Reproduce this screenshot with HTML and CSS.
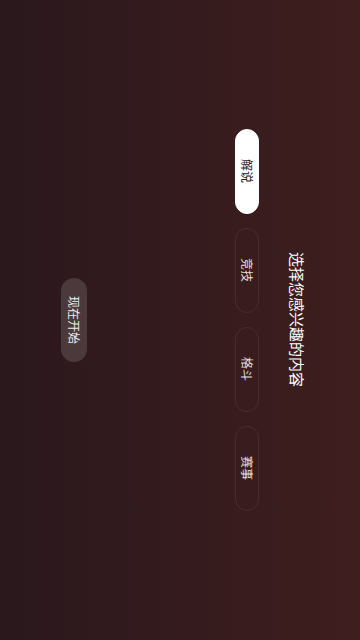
FILE: index.html
```html
<!DOCTYPE html>
<html lang="zh-CN">
<head>
    <meta charset="UTF-8">
    <meta name="viewport" content="width=device-width, initial-scale=1.0">
    <title>选择兴趣</title>
    <link rel="stylesheet" href="styles.css">
</head>
<body>
    <div class="page">
        <h1 class="title">选择您感兴趣的内容</h1>
        <div class="tags">
            <button class="tag active">解说</button>
            <button class="tag">竞技</button>
            <button class="tag">格斗</button>
            <button class="tag">赛事</button>
        </div>
        <button class="start-btn">现在开始</button>
    </div>
</body>
</html>
```

FILE: styles.css
```css
html {
    background: linear-gradient(to right, #2a181d, #3f1e1e);
    height: 100%;
}
body {
    margin: 0;
    width: 360px;
    height: 640px;
    overflow: hidden;
    font-family: "Noto Sans CJK SC", "Noto Sans", sans-serif;
    writing-mode: vertical-rl;
    text-orientation: sideways;
}
.page {
    display: flex;
    flex-direction: column;
    align-items: center;
    inline-size: 640px;
    padding-block-start: 53px;
    box-sizing: border-box;
}
.title {
    margin: 0;
    color: #fff;
    font-size: 15px;
    font-weight: normal;
    line-height: 20px;
}
.tags {
    display: flex;
    gap: 14px;
    margin-block-start: 28px;
}
.tag {
    inline-size: 85px;
    block-size: 24px;
    padding: 0;
    border: 1px solid rgba(255, 255, 255, 0.08);
    border-radius: 12px;
    background: transparent;
    color: #e6dcdc;
    font-family: inherit;
    font-size: 12px;
    writing-mode: inherit;
    cursor: pointer;
}
.tag.active {
    background-color: #fff;
    border-color: #fff;
    color: #222;
}
.start-btn {
    margin-block-start: 148px;
    inline-size: 84px;
    block-size: 26px;
    padding: 0;
    border: none;
    border-radius: 13px;
    background-color: rgba(255, 255, 255, 0.14);
    color: #eee;
    font-family: inherit;
    font-size: 12px;
    writing-mode: inherit;
    cursor: pointer;
}
```
